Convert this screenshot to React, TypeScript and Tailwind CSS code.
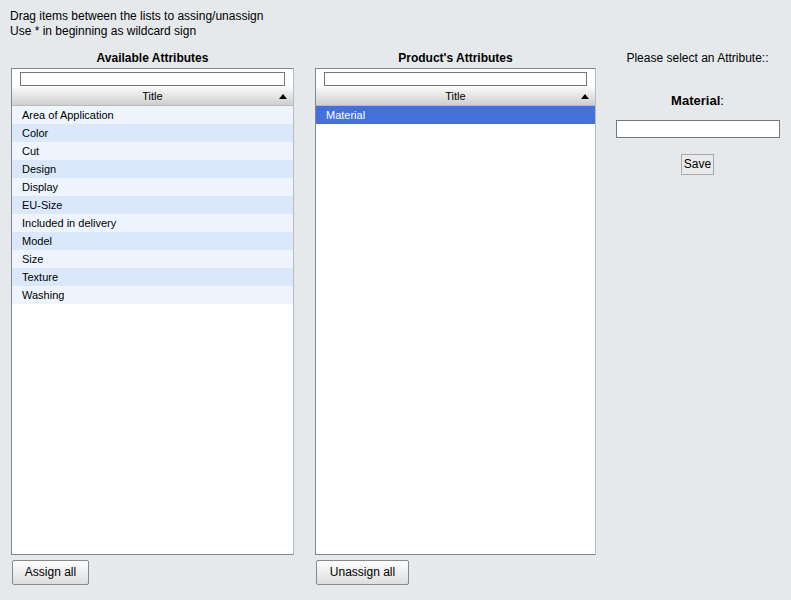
import React from "react";

const avail = ["Area of Application","Color","Cut","Design","Display","EU-Size","Included in delivery","Model","Size","Texture","Washing"];

function Panel({ title, items, selected, btn, btnW }: { title: string; items: string[]; selected?: boolean; btn: string; btnW: string }) {
  return (
    <div className="flex flex-col">
      <div className="h-[20px] flex items-end justify-center font-bold text-[12px] pb-[1px]">{title}</div>
      <div className="h-[487px] bg-white border border-[#888] border-r-[#bbb] flex flex-col">
        <div className="h-[18px] bg-white flex items-center px-[8px] pt-[2px]">
          <div className="w-full h-[14px] border border-[#777] bg-white" />
        </div>
        <div className="h-[19px] relative flex items-center justify-center text-[11px] border-b border-[#bbb] bg-gradient-to-b from-[#fafafa] to-[#cfcfcf]">
          Title
          <svg className="absolute right-[6px] top-[7px]" width="8" height="5" viewBox="0 0 8 5"><path d="M0 5 L4 0 L8 5Z" fill="#000" /></svg>
        </div>
        {items.map((t, i) => (
          <div key={t} className={`h-[18px] flex items-center pl-[10px] text-[11px] ${selected ? "bg-[#4370db] text-white" : i % 2 ? "bg-[#dbe8fb]" : "bg-[#eef5fe]"}`}>{t}</div>
        ))}
      </div>
      <div className="pt-[4px]">
        <button className={`${btnW} h-[25px] text-[12px] border border-[#888] rounded-[2px] bg-gradient-to-b from-white to-[#ddd]`}>{btn}</button>
      </div>
    </div>
  );
}

export default function App() {
  return (
    <div className="w-[791px] h-[600px] bg-[#e6e9ec] text-black" style={{ fontFamily: '"Liberation Sans", Arial, sans-serif' }}>
      <div className="pl-[10px] pt-[9px] text-[12px] leading-[15px]">
        <div>Drag items between the lists to assing/unassign</div>
        <div>Use * in beginning as wildcard sign</div>
      </div>
      <div className="flex pl-[11px] pt-[9px]">
        <div className="w-[283px]"><Panel title="Available Attributes" items={avail} btn="Assign all" btnW="w-[77px] ml-[1px]" /></div>
        <div className="w-[281px] ml-[21px]"><Panel title="Product's Attributes" items={["Material"]} selected btn="Unassign all" btnW="w-[93px] ml-[1px]" /></div>
        <div className="flex-1 flex flex-col items-center text-[12px] pl-[8px]">
          <div className="h-[20px] flex items-end pb-[1px]">Please select an Attribute::</div>
          <div className="mt-[23px] text-[13px]"><b>Material</b>:</div>
          <div className="mt-[9px] w-[164px] h-[18px] border border-[#777] bg-white" />
          <button className="mt-[16px] h-[21px] px-[2px] text-[12px] border border-[#aaa] bg-[#eaeaea]">Save</button>
        </div>
      </div>
    </div>
  );
}
